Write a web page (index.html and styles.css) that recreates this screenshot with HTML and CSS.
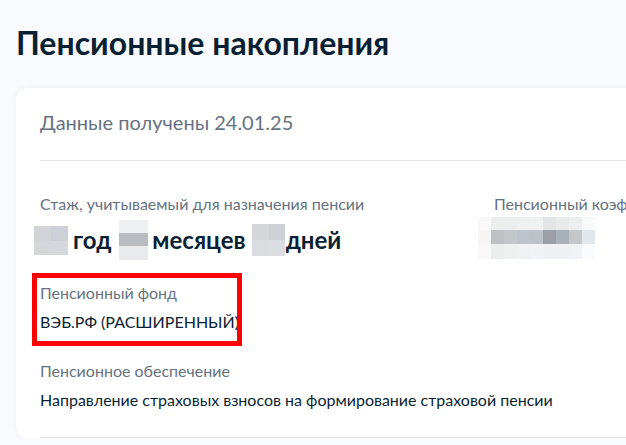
FILE: index.html
```html
<!DOCTYPE html>
<html>
<head>
    <title>Пенсионные накопления</title>
    <link rel="stylesheet" href="styles.css">
</head>
<body>
    <h1 class="page-title">Пенсионные накопления</h1>

    <div class="card">
        <div class="card-head">Данные получены 24.01.25</div>

        <div class="card-body">
            <div class="stats">
                <div class="field">
                    <div class="field-label">Стаж, учитываемый для назначения пенсии</div>
                    <div class="field-big">
                        <span class="blur blur-a"><i></i><i></i><i></i><i></i></span>
                        <span class="unit">год</span>
                        <span class="blur blur-b"><i></i><i></i><i></i></span>
                        <span class="unit">месяцев</span>
                        <span class="blur blur-c"><i></i><i></i><i></i><i></i></span>
                        <span class="unit">дней</span>
                    </div>
                </div>
                <div class="field">
                    <div class="field-label">Пенсионный коэффициент</div>
                    <div class="blur blur-wide">
                        <i></i><i></i><i></i><i></i><i></i><i></i><i></i><i></i><i></i>
                        <i></i><i></i><i></i><i></i><i></i><i></i><i></i><i></i><i></i>
                        <i></i><i></i><i></i><i></i><i></i><i></i><i></i><i></i><i></i>
                    </div>
                </div>
            </div>

            <div class="field field-marked">
                <div class="field-label">Пенсионный фонд</div>
                <div class="field-value">ВЭБ.РФ (РАСШИРЕННЫЙ)</div>
                <div class="mark"></div>
            </div>

            <div class="field">
                <div class="field-label">Пенсионное обеспечение</div>
                <div class="field-value">Направление страховых взносов на формирование страховой пенсии</div>
            </div>
        </div>
    </div>
</body>
</html>
```

FILE: styles.css
```css
body {
    font-family: Lato, "Open Sans", sans-serif;
    background-color: #f8fafd;
    color: #0b1f33;
    margin: 0;
    overflow: hidden;
}

.page-title {
    font-size: 32px;
    line-height: 40px;
    font-weight: 700;
    margin: 23px 0 25px 16px;
}

.card {
    width: 720px;
    margin-left: 16px;
    padding: 0 24px;
    background-color: #fff;
    border-radius: 12px;
    box-shadow: 0 -1px 6px rgba(11, 31, 51, 0.04);
}

.card-head {
    font-size: 20px;
    line-height: 24px;
    color: #66727f;
    padding: 22px 0 26px;
    border-bottom: 1px solid #e3e5e8;
}

.card-body {
    padding: 33px 0 25px;
    display: flex;
    flex-direction: column;
    gap: 27px;
    border-bottom: 1px solid #e3e5e8;
}

.stats {
    display: grid;
    grid-template-columns: 454px auto;
    align-items: start;
    height: 62px;
}

.field {
    display: flex;
    flex-direction: column;
    gap: 7px;
}

.field-label {
    font-size: 16px;
    line-height: 20px;
    color: #66727f;
    white-space: nowrap;
}

.field-value {
    font-size: 16px;
    line-height: 24px;
}

.field-big {
    display: flex;
    align-items: center;
    height: 32px;
    margin-top: 3px;
    font-size: 24px;
    font-weight: 700;
}

.unit {
    line-height: 32px;
}

/* pixelated "hidden" values */
.blur {
    display: grid;
    flex-shrink: 0;
}

.blur i {
    display: block;
}

.blur-a {
    grid-template-columns: 17px 17px;
    grid-template-rows: 15px 14px;
    margin: 0 5px 0 -6px;
}

.blur-a i:nth-child(1) { background: #d3d4d8; }
.blur-a i:nth-child(2) { background: #cdd1d7; }
.blur-a i:nth-child(3) { background: #d4d6da; }
.blur-a i:nth-child(4) { background: #d5d7db; }

.blur-b {
    grid-template-columns: 29px;
    grid-template-rows: 13px 13px 14px;
    margin: 0 4px 0 8px;
}

.blur-b i:nth-child(1) { background: #eeeff0; }
.blur-b i:nth-child(2) { background: #b8bcc0; }
.blur-b i:nth-child(3) { background: #e9eaec; }

.blur-c {
    grid-template-columns: 17px 16px;
    grid-template-rows: 16px 16px;
    margin: 0 1px 0 6px;
}

.blur-c i:nth-child(1) { background: #d4d5d8; }
.blur-c i:nth-child(2) { background: #cdd0d5; }
.blur-c i:nth-child(3) { background: #dadcdf; }
.blur-c i:nth-child(4) { background: #dcdde0; }

.blur-wide {
    grid-template-columns: repeat(9, 13px);
    grid-template-rows: 13px 14px 15px;
    margin: -4px 0 0 -16px;
}

.blur-wide i:nth-child(1) { background: #f8f8f8; }
.blur-wide i:nth-child(2) { background: #eceded; }
.blur-wide i:nth-child(3) { background: #eceeef; }
.blur-wide i:nth-child(4) { background: #eef0f1; }
.blur-wide i:nth-child(5) { background: #f0f1f2; }
.blur-wide i:nth-child(6) { background: #e3e4e6; }
.blur-wide i:nth-child(7) { background: #e8eaec; }
.blur-wide i:nth-child(8) { background: #eceeef; }
.blur-wide i:nth-child(9) { background: #f8f9fa; }
.blur-wide i:nth-child(10) { background: #f5f5f5; }
.blur-wide i:nth-child(11) { background: #bfc0c2; }
.blur-wide i:nth-child(12) { background: #c4c7ca; }
.blur-wide i:nth-child(13) { background: #bcc3ca; }
.blur-wide i:nth-child(14) { background: #bcc2c8; }
.blur-wide i:nth-child(15) { background: #9ca0a6; }
.blur-wide i:nth-child(16) { background: #aab0b8; }
.blur-wide i:nth-child(17) { background: #c4c6c8; }
.blur-wide i:nth-child(18) { background: #e2e7ec; }
.blur-wide i:nth-child(19) { background: #f8f8f8; }
.blur-wide i:nth-child(20) { background: #eceded; }
.blur-wide i:nth-child(21) { background: #eef0f0; }
.blur-wide i:nth-child(22) { background: #f0f1f2; }
.blur-wide i:nth-child(23) { background: #f2f3f4; }
.blur-wide i:nth-child(24) { background: #eef0f1; }
.blur-wide i:nth-child(25) { background: #eef0f1; }
.blur-wide i:nth-child(26) { background: #f0f2f3; }
.blur-wide i:nth-child(27) { background: #fafbfc; }

/* red highlight frame drawn over the field */
.field-marked {
    position: relative;
}

.mark {
    position: absolute;
    left: -8px;
    top: -10px;
    width: 200px;
    height: 63px;
    border: 5px solid #ff0000;
}
```
